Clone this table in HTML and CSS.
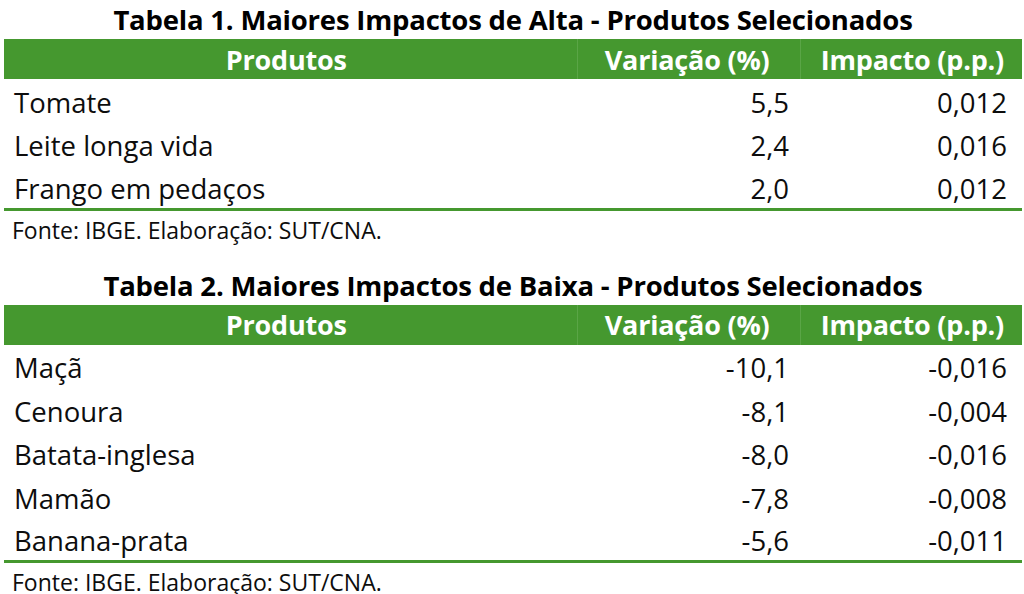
FILE: index.html
```html
<!DOCTYPE html>
<html lang="pt-BR">
<head>
  <meta charset="UTF-8" />
  <title>Maiores Impactos - Produtos Selecionados</title>
  <link rel="stylesheet" href="styles.css">
</head>
<body>
  <div class="page">
    <h2 class="title">Tabela 1. Maiores Impactos de Alta - Produtos Selecionados</h2>
    <table class="data">
      <thead>
        <tr>
          <th class="prod">Produtos</th>
          <th class="num">Variação (%)</th>
          <th class="num">Impacto (p.p.)</th>
        </tr>
      </thead>
      <tbody>
        <tr><td>Tomate</td><td class="num">5,5</td><td class="num">0,012</td></tr>
        <tr><td>Leite longa vida</td><td class="num">2,4</td><td class="num">0,016</td></tr>
        <tr><td>Frango em pedaços</td><td class="num">2,0</td><td class="num">0,012</td></tr>
      </tbody>
    </table>
    <p class="source">Fonte: IBGE. Elaboração: SUT/CNA.</p>

    <h2 class="title">Tabela 2. Maiores Impactos de Baixa - Produtos Selecionados</h2>
    <table class="data">
      <thead>
        <tr>
          <th class="prod">Produtos</th>
          <th class="num">Variação (%)</th>
          <th class="num">Impacto (p.p.)</th>
        </tr>
      </thead>
      <tbody>
        <tr><td>Maçã</td><td class="num">-10,1</td><td class="num">-0,016</td></tr>
        <tr><td>Cenoura</td><td class="num">-8,1</td><td class="num">-0,004</td></tr>
        <tr><td>Batata-inglesa</td><td class="num">-8,0</td><td class="num">-0,016</td></tr>
        <tr><td>Mamão</td><td class="num">-7,8</td><td class="num">-0,008</td></tr>
        <tr><td>Banana-prata</td><td class="num">-5,6</td><td class="num">-0,011</td></tr>
      </tbody>
    </table>
    <p class="source last">Fonte: IBGE. Elaboração: SUT/CNA.</p>
  </div>
</body>
</html>
```

FILE: styles.css
```css
* {
  box-sizing: border-box;
}

body {
  margin: 0;
  background: #ffffff;
  font-family: 'Open Sans', Lato, sans-serif;
  color: #0d0d0d;
}

.page {
  padding: 0 2px 0 4px;
}

.title {
  margin: 0;
  height: 39px;
  text-align: center;
  font-size: 27.5px;
  font-weight: bold;
  line-height: 39px;
  letter-spacing: -0.2px;
  color: #000;
}

.data {
  width: 1018px;
  border-collapse: collapse;
  font-size: 27.5px;
}

.data th {
  background-color: #45982f;
  color: #fff;
  font-weight: bold;
  font-size: 27px;
  height: 40px;
  padding: 0 18px 0 10px;
  border-left: 1px solid #5aa546;
  letter-spacing: -0.2px;
}

.data th:first-child {
  border-left: none;
}

.data .prod {
  width: 573px;
  text-align: center;
}

.data td {
  height: 43.4px;
  padding: 3px 15px 0 10px;
}

.data th.num,
.data td.num {
  text-align: right;
}

.data th:nth-child(2) {
  width: 223px;
  padding-right: 30px;
}

.data td:nth-child(2) {
  padding-right: 11px;
}

.data tbody tr:last-child td {
  border-bottom: 3px solid #45982f;
}

.source {
  margin: 5px 0 22px 8px;
  height: 28px;
  font-size: 23px;
  line-height: 28px;
}

.source.last {
  margin-bottom: 0;
}
```
